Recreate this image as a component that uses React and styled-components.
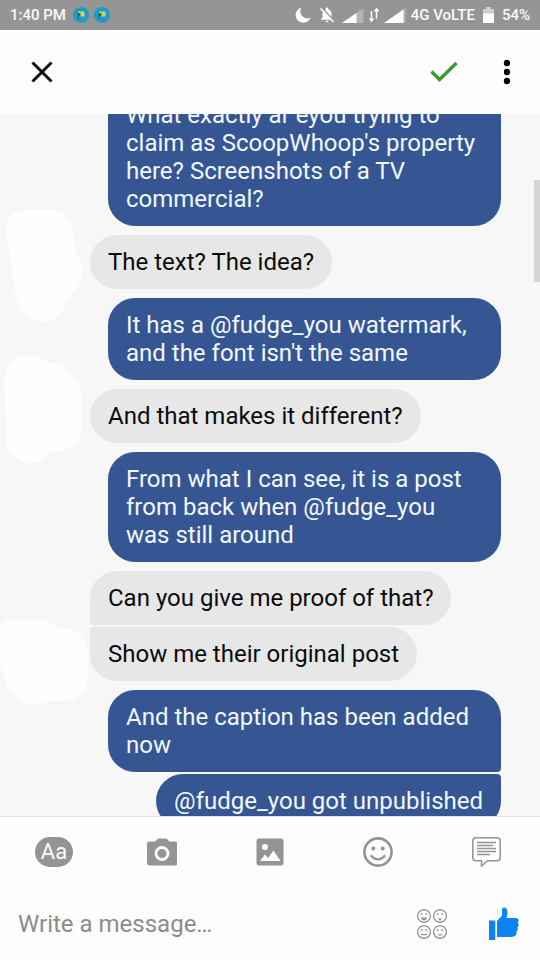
import React, { useLayoutEffect, useRef } from "react";
import styled, { createGlobalStyle, css } from "styled-components";

const GlobalStyle = createGlobalStyle`
  *, *::before, *::after { box-sizing: border-box; }
  body {
    margin: 0;
    background: #fdfdfd;
    font-family: Roboto, "Open Sans", sans-serif;
  }
`;

const Screen = styled.div`
  display: flex;
  flex-direction: column;
  height: 100vh;
  overflow: hidden;
  background: #f7f7f7;
`;

/* ---------- status bar ---------- */

const StatusBar = styled.div`
  display: flex;
  align-items: center;
  justify-content: space-between;
  flex: none;
  height: 30px;
  padding: 0 10px;
  background: #959595;
  color: #fafafa;
  font-size: 15px;
  font-weight: 500;
  line-height: 20px;
  white-space: nowrap;
`;

const StatusGroup = styled.div`
  display: flex;
  align-items: center;
  gap: ${(p) => p.$gap}px;
`;

const Glyph = styled.svg`
  display: block;
  flex: none;
`;

const Notifications = styled.div`
  display: flex;
  gap: 5px;
`;

/* ---------- header ---------- */

const Header = styled.header`
  display: flex;
  align-items: center;
  flex: none;
  height: 84px;
  padding: 0 9px 0 18px;
  background: #fdfdfd;
`;

const IconButton = styled.button`
  display: flex;
  align-items: center;
  justify-content: center;
  flex: none;
  width: 48px;
  height: 48px;
  padding: 0;
  border: 0;
  background: none;
  color: ${(p) => p.$color || "#949494"};
  cursor: pointer;
`;

const HeaderTitle = styled.div`
  flex: 1;
  height: 54px;
  margin: 0 104px 0 30px;
  border-radius: 27px;
  background: #fefefe;
`;

const HeaderActions = styled.div`
  display: flex;
  gap: 15px;
`;

/* ---------- conversation ---------- */

const Conversation = styled.main`
  position: relative;
  flex: 1;
  min-height: 0;
`;

const MessageList = styled.div`
  display: flex;
  flex-direction: column;
  height: 100%;
  padding: 0 39px 16px 90px;
  overflow-x: hidden;
  overflow-y: auto;
  scrollbar-width: none;
`;

const ScrollThumb = styled.div`
  position: absolute;
  top: 66px;
  right: 0;
  width: 6px;
  height: 102px;
  background: #d5d5d5;
`;

const MessageRow = styled.div`
  position: relative;
  display: flex;
  flex: none;
  justify-content: ${(p) => (p.$sent ? "flex-end" : "flex-start")};
  padding-left: ${(p) => (p.$sent ? 18 : 0)}px;
  margin-top: ${(p) => (p.$joined ? 2 : 9)}px;

  &:first-child {
    margin-top: 0;
  }
`;

const Bubble = styled.p`
  margin: 0;
  padding: 13px 18px;
  border-radius: 27px;
  font-size: 24px;
  line-height: 28px;
  ${(p) =>
    p.$sent
      ? css`
          background: #365693;
          color: #f1f8ff;
          ${p.$joinBottom && "border-bottom-right-radius: 4px;"}
          ${p.$joinTop && "border-top-right-radius: 4px;"}
        `
      : css`
          background: #e7e7e7;
          color: #0b0b0b;
          ${p.$joinBottom && "border-bottom-left-radius: 4px;"}
          ${p.$joinTop && "border-top-left-radius: 4px;"}
        `}
`;

const Avatar = styled.svg`
  position: absolute;
  top: 50%;
  right: 100%;
  width: 90px;
  height: 120px;
  margin-top: -60px;
  overflow: visible;
`;

/* ---------- footer ---------- */

const Footer = styled.footer`
  flex: none;
  border-top: 1px solid #dddfe0;
  background: #fdfdfd;
`;

const Toolbar = styled.div`
  display: grid;
  grid-template-columns: repeat(5, 1fr);
  justify-items: center;
  align-items: center;
  height: 70px;
`;

const TextBadge = styled.span`
  display: flex;
  align-items: center;
  justify-content: center;
  width: 38px;
  height: 30px;
  border-radius: 15px;
  background: #949494;
  color: #fdfdfd;
  font-family: Roboto, sans-serif;
  font-size: 22px;
  line-height: 30px;
`;

const Composer = styled.form`
  display: flex;
  align-items: center;
  height: 73px;
  padding: 0 12px 0 18px;
`;

const MessageInput = styled.input`
  flex: 1;
  min-width: 0;
  height: 48px;
  padding: 0;
  border: 0;
  outline: 0;
  background: none;
  color: #0b0b0b;
  font-family: Roboto, sans-serif;
  font-size: 24px;

  &::placeholder {
    color: #8c8c8c;
    opacity: 1;
  }
`;

const ComposerActions = styled.div`
  display: flex;
  gap: 24px;
`;

/* ---------- icons ---------- */

const AppDot = () => (
  <Glyph width="16" height="16" viewBox="0 0 16 16" aria-hidden="true">
    <circle cx="8" cy="8" r="8" fill="#1f9bcb" />
    <path d="M4.5 4.500h1.500v7h-1.500z" fill="#176a70" />
    <path d="M5 4.500h6.500v5h-6.500z" fill="#d3d75c" />
    <path d="M5 6h2.500v3.500h-2.500z" fill="#2b7447" />
  </Glyph>
);

const MoonIcon = () => (
  <Glyph width="16" height="16" viewBox="0 0 16 16" aria-hidden="true">
    <path d="M6.500 0.500A7.700 7.700 0 1 0 15.600 10.500A7 7 0 0 1 6.500 0.500z" fill="#fff" />
  </Glyph>
);

const BellOffIcon = () => (
  <Glyph width="14" height="16" viewBox="0 0 14 16" aria-hidden="true">
    <path
      d="M7 0.500c.8 0 1.200.5 1.200 1.200v.5c2.200.6 3.300 2.300 3.300 4.600v3.700l1.500 1.500v.7H1v-.7l1.500-1.500V6.800c0-2.300 1.100-4 3.300-4.600v-.5C5.800 1 6.200.5 7 .5z"
      fill="#fff"
    />
    <path d="M5.500 13.700h3a1.500 1.500 0 0 1-3 0z" fill="#fff" />
    <path d="M1.500 0.500L14.500 14" stroke="#959595" strokeWidth="1.500" />
    <path d="M0.500 1.500L13.500 15" stroke="#fff" strokeWidth="1.500" />
  </Glyph>
);

const SignalIcon = ({ full }) => (
  <Glyph width="22" height="15" viewBox="0 0 22 15" aria-hidden="true">
    <path d="M0 15L21.500 0V15z" fill="#b4b4b4" />
    {full ? (
      <path d="M0 15L19.500 1.400V15z" fill="#fff" />
    ) : (
      <path d="M0 15L14.500 4.900V15z" fill="#fff" />
    )}
  </Glyph>
);

const DataIcon = () => (
  <Glyph width="10" height="14" viewBox="0 0 10 14" aria-hidden="true">
    <path
      d="M2.500 3v9.500M0.500 10.500l2 2.500l2-2.500M7.500 10.500V1.500M5.500 3.500l2-2.500l2 2.500"
      fill="none"
      stroke="#fff"
      strokeWidth="1.500"
    />
  </Glyph>
);

const BatteryIcon = () => (
  <Glyph width="11" height="16" viewBox="0 0 11 16" aria-hidden="true">
    <path d="M3 0h5v2h3v5H0V2h3z" fill="#cfcfcf" />
    <path d="M0 6.500h11V16H0z" fill="#fff" />
  </Glyph>
);

const CloseIcon = () => (
  <Glyph width="22" height="22" viewBox="0 0 22 22" aria-hidden="true">
    <path d="M1.500 1.500L20.500 20.500M20.500 1.500L1.500 20.500" stroke="#0a0a0a" strokeWidth="3" />
  </Glyph>
);

const CheckIcon = () => (
  <Glyph width="30" height="22" viewBox="0 0 30 22" aria-hidden="true">
    <path d="M2.500 10.500L10.500 18.500L27.500 2" fill="none" stroke="#3c9b35" strokeWidth="3.400" />
  </Glyph>
);

const MoreIcon = () => (
  <Glyph width="8" height="26" viewBox="0 0 8 26" aria-hidden="true">
    <circle cx="4" cy="4" r="3.200" />
    <circle cx="4" cy="13" r="3.200" />
    <circle cx="4" cy="22" r="3.200" />
  </Glyph>
);

const CameraIcon = () => (
  <Glyph width="30" height="28" viewBox="0 0 30 28" aria-hidden="true">
    <path
      d="M2.500 3.500H8L10.500 1q.6-.6 1.500-.6h6.500q.9 0 1.500.6l2.500 2.500h5.500q2.500 0 2.500 2.500V25q0 2.500-2.500 2.500h-25Q0 27.500 0 25V6q0-2.500 2.500-2.500z"
      fill="currentColor"
    />
    <circle cx="15" cy="15.500" r="6" fill="none" stroke="#fdfdfd" strokeWidth="2.800" />
  </Glyph>
);

const PhotoIcon = () => (
  <Glyph width="28" height="28" viewBox="0 0 28 28" aria-hidden="true">
    <rect x="0.500" y="0.500" width="27" height="27" rx="2.500" fill="currentColor" />
    <circle cx="9" cy="9" r="3" fill="#fdfdfd" />
    <path d="M4 23L9 16.500L12 20L17.500 12.500L24.500 23z" fill="#fdfdfd" />
  </Glyph>
);

const SmileIcon = () => (
  <Glyph width="30" height="30" viewBox="0 0 30 30" aria-hidden="true">
    <circle cx="15" cy="15" r="13.600" fill="none" stroke="currentColor" strokeWidth="2.600" />
    <circle cx="10.300" cy="11.500" r="2" fill="currentColor" />
    <circle cx="19.700" cy="11.500" r="2" fill="currentColor" />
    <path d="M7.800 18.200Q15 26.500 22.200 18.200" fill="none" stroke="currentColor" strokeWidth="2.400" />
  </Glyph>
);

const CommentIcon = () => (
  <Glyph width="29" height="30" viewBox="0 0 29 30" aria-hidden="true">
    <path
      d="M4 0.800h21q3.200 0 3.200 3.200v16.500q0 3.200-3.200 3.200H15.500L9.500 29V23.700H4q-3.200 0-3.200-3.200V4q0-3.200 3.200-3.200z"
      fill="none"
      stroke="currentColor"
      strokeWidth="1.500"
    />
    <path
      d="M5 5.500H24M5 8.500H21M5 11.500H24M5 14.500H24M5 17.500H18"
      stroke="currentColor"
      strokeWidth="1.400"
    />
  </Glyph>
);

const faceMouths = ["M4 8.500h6Q9.500 11.500 7 11.500T4 8.500z", "M6 9h2v2.500H6z", "M4 9h6v1.200H4z", "M4.500 10.500Q7 7 9.500 10.500z"];

const StickersIcon = () => (
  <Glyph width="30" height="30" viewBox="0 0 30 30" aria-hidden="true">
    {faceMouths.map((mouth, i) => (
      <g key={mouth} transform={`translate(${(i % 2) * 16} ${i > 1 ? 16 : 0})`} fill="currentColor">
        <circle cx="7" cy="7" r="6.400" fill="none" stroke="currentColor" strokeWidth="1.300" />
        <circle cx="4.800" cy="5" r="0.900" />
        <circle cx="9.200" cy="5" r="0.900" />
        <path d={mouth} />
      </g>
    ))}
  </Glyph>
);

const ThumbIcon = () => (
  <Glyph width="30" height="34" viewBox="0 0 30 34" aria-hidden="true">
    <path d="M0 13.500h6.300V33H0z" fill="currentColor" />
    <path
      d="M8 14L13 8.500V3q0-2.500 2-2.500q3 0 3.500 5q.1 2.500-1.200 5.500H27q3 .5 2.500 3q0 1-.8 1.800q1.200 1 .8 2.700q-.2 1.200-1.200 2q.8 1.200.4 2.500q-.4 1.200-1.400 1.700q.6 1.500 0 2.800q-.8 1.700-2.800 1.900q-1.700.6-4 .6H8z"
      fill="currentColor"
    />
  </Glyph>
);

/* ---------- data ---------- */

const blankShapes = {
  tall: "M8 18Q14 7 32 8H52Q68 9 72 24L76 50Q83 60 83 70Q82 84 67 98Q60 120 42 120Q24 118 18 104Q13 82 10 52Q5 30 8 18z",
  wide: "M5 19Q10 0 28 -1Q40 0 46 6Q66 7 76 24Q82 34 82 52V74Q80 92 58 95Q50 96 44 103Q34 108 26 107Q6 100 6 82L5 40Q3 28 5 19z",
  low: "M0 30Q10 23 24 26Q42 22 58 34Q88 34 88 66Q88 92 84 98Q76 110 50 107Q40 112 24 109Q10 104 4 84Q2 76 0 72z",
};

const messages = [
  { sent: true, text: "What exactly ar eyou trying to claim as ScoopWhoop's property here? Screenshots of a TV commercial?" },
  { text: "The text? The idea?", avatar: "tall" },
  { sent: true, text: "It has a @fudge_you watermark, and the font isn't the same" },
  { text: "And that makes it different?", avatar: "wide" },
  { sent: true, text: "From what I can see, it is a post from back when @fudge_you was still around" },
  { text: "Can you give me proof of that?", joinBottom: true },
  { text: "Show me their original post", joinTop: true, avatar: "low" },
  { sent: true, text: "And the caption has been added now", joinBottom: true },
  { sent: true, text: "@fudge_you got unpublished", joinTop: true },
];

const INITIAL_SCROLL = 26;

function Message({ sent, text, avatar, joinTop, joinBottom }) {
  return (
    <MessageRow $sent={sent} $joined={joinTop}>
      {avatar && (
        <Avatar viewBox="0 0 90 120" aria-hidden="true">
          <path d={blankShapes[avatar]} fill="#fefefe" />
        </Avatar>
      )}
      <Bubble $sent={sent} $joinTop={joinTop} $joinBottom={joinBottom}>
        {text}
      </Bubble>
    </MessageRow>
  );
}

export default function App() {
  const listRef = useRef(null);

  useLayoutEffect(() => {
    listRef.current.scrollTop = INITIAL_SCROLL;
  }, []);

  return (
    <>
      <GlobalStyle />
      <Screen>
        <StatusBar>
          <StatusGroup $gap={7}>
            <span>1:40 PM</span>
            <Notifications>
              <AppDot />
              <AppDot />
            </Notifications>
          </StatusGroup>
          <StatusGroup $gap={8}>
            <StatusGroup $gap={9}>
              <MoonIcon />
              <BellOffIcon />
            </StatusGroup>
            <StatusGroup $gap={5}>
              <SignalIcon />
              <DataIcon />
              <SignalIcon full />
              <span>4G VoLTE</span>
            </StatusGroup>
            <BatteryIcon />
            <span>54%</span>
          </StatusGroup>
        </StatusBar>

        <Header>
          <IconButton type="button" aria-label="Close">
            <CloseIcon />
          </IconButton>
          <HeaderTitle />
          <HeaderActions>
            <IconButton type="button" aria-label="Confirm">
              <CheckIcon />
            </IconButton>
            <IconButton type="button" aria-label="More options" $color="#0a0a0a">
              <MoreIcon />
            </IconButton>
          </HeaderActions>
        </Header>

        <Conversation>
          <MessageList ref={listRef}>
            {messages.map((m) => (
              <Message key={m.text} {...m} />
            ))}
          </MessageList>
          <ScrollThumb />
        </Conversation>

        <Footer>
          <Toolbar>
            <IconButton type="button" aria-label="Text">
              <TextBadge>Aa</TextBadge>
            </IconButton>
            <IconButton type="button" aria-label="Camera">
              <CameraIcon />
            </IconButton>
            <IconButton type="button" aria-label="Photos">
              <PhotoIcon />
            </IconButton>
            <IconButton type="button" aria-label="Emoji">
              <SmileIcon />
            </IconButton>
            <IconButton type="button" aria-label="Quick replies">
              <CommentIcon />
            </IconButton>
          </Toolbar>
          <Composer onSubmit={(e) => e.preventDefault()}>
            <MessageInput type="text" aria-label="Write a message" placeholder="Write a message…" />
            <ComposerActions>
              <IconButton type="button" aria-label="Stickers">
                <StickersIcon />
              </IconButton>
              <IconButton type="button" aria-label="Like" $color="#0a84f5">
                <ThumbIcon />
              </IconButton>
            </ComposerActions>
          </Composer>
        </Footer>
      </Screen>
    </>
  );
}
